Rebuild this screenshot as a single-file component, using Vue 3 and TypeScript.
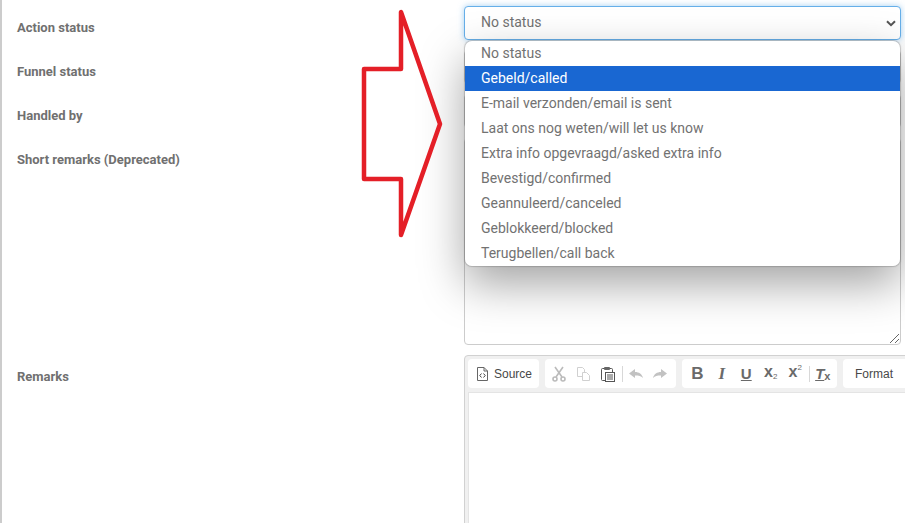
<script setup lang="ts">
const statuses: string[] = [
  'No status',
  'Gebeld/called',
  'E-mail verzonden/email is sent',
  'Laat ons nog weten/will let us know',
  'Extra info opgevraagd/asked extra info',
  'Bevestigd/confirmed',
  'Geannuleerd/canceled',
  'Geblokkeerd/blocked',
  'Terugbellen/call back',
]
const activeIndex = 1
</script>

<template>
  <div class="page">
    <form class="form">
      <div class="label">Action status</div>
      <div class="field select-wrap">
        <div class="select focused">
          <span>No status</span>
          <svg class="chevron" width="10" height="7" viewBox="0 0 10 7"><path d="M1 1.200 5 5.200l4-4" fill="none" stroke="#555" stroke-width="2" /></svg>
        </div>
        <ul class="menu">
          <li v-for="(s, i) in statuses" :key="s" :class="{ active: i === activeIndex }">{{ s }}</li>
        </ul>
      </div>

      <div class="label">Funnel status</div>
      <div class="field"><div class="select"></div></div>

      <div class="label">Handled by</div>
      <div class="field"><div class="select"></div></div>

      <div class="label">Short remarks (Deprecated)</div>
      <div class="field">
        <div class="textarea">
          <svg class="grip" width="11" height="11" viewBox="0 0 11 11"><path d="M1 10 10 1M6 10l4-4" stroke="#666" stroke-width="1" fill="none" /></svg>
        </div>
      </div>

      <div class="label remarks">Remarks</div>
      <div class="editor">
        <div class="toolbar">
          <div class="group">
            <button type="button" class="tool source">
              <svg width="16" height="16" viewBox="0 0 16 16"><path d="M2.500 1.500h6.500l3.500 3.500v9.500H2.500zM9 1.500V5h3.500" fill="none" stroke="#666" /><path d="M6.500 7.500 4.800 9.500l1.700 2M8.500 7.500l1.700 2-1.700 2" fill="none" stroke="#444" /></svg>
              <span>Source</span>
            </button>
          </div>
          <div class="group g2">
            <span class="tool icon">
              <svg width="16" height="16" viewBox="0 0 16 16"><g fill="none" stroke="#bbb" stroke-width="1.600"><circle cx="4" cy="13" r="2" /><circle cx="12" cy="13" r="2" /><path d="M5 11 12 1M11 11 4 1" /></g></svg>
            </span>
            <span class="tool icon">
              <svg width="16" height="16" viewBox="0 0 16 16"><g fill="#fff" stroke="#d0d0d0"><path d="M1.500 1.500h5l2 2v7h-7z" /><path d="M6.500 6.500h4l3 3v5h-7z" /></g></svg>
            </span>
            <span class="tool icon">
              <svg width="16" height="16" viewBox="0 0 16 16"><rect x="1.500" y="2.500" width="11" height="12" rx="1" fill="none" stroke="#555" /><rect x="4" y="1" width="6" height="3" rx="1" fill="#666" /><rect x="5.500" y="6.500" width="9" height="9" fill="#fff" stroke="#555" /><path d="M7 9h6M7 11h6M7 13h6" stroke="#555" /></svg>
            </span>
            <i class="sep"></i>
            <span class="tool icon">
              <svg width="16" height="16" viewBox="0 0 16 16"><path d="M1 7.500 7 3v3c4 0 7 2 8 6-2-2-4-2.500-8-2.500V12z" fill="#c2c2c2" /></svg>
            </span>
            <span class="tool icon">
              <svg width="16" height="16" viewBox="0 0 16 16"><path d="M15 7.500 9 3v3c-4 0-7 2-8 6 2-2 4-2.500 8-2.500V12z" fill="#c2c2c2" /></svg>
            </span>
          </div>
          <div class="group g3">
            <span class="tool icon glyph bold">B</span>
            <span class="tool icon glyph ital">I</span>
            <span class="tool icon glyph under">U</span>
            <span class="tool icon glyph script">x<sub>2</sub></span>
            <span class="tool icon glyph script">x<sup>2</sup></span>
            <i class="sep"></i>
            <span class="tool icon glyph clear"><u>T</u><sub>x</sub></span>
          </div>
          <div class="group format">Format</div>
        </div>
        <div class="content"></div>
      </div>
    </form>

    <svg class="arrow" width="90" height="240" viewBox="0 0 90 240">
      <path d="M41 12V69H4V179H41V235L80 124Z" fill="none" stroke="#e41f27" stroke-width="4.500" stroke-linejoin="round" />
    </svg>
  </div>
</template>

<style>
html, body { margin: 0; background: #fff; overflow: hidden; }
</style>

<style scoped>
.page {
  position: relative;
  width: 905px;
  height: 523px;
  overflow: hidden;
  box-sizing: border-box;
  border-left: 2px solid #ccc;
  font-family: Roboto, "Liberation Sans", sans-serif;
  color: #727272;
  background: #fff;
}
.form {
  display: grid;
  grid-template-columns: 447px 437px;
  grid-template-rows: 44px 44px 44px 217px auto;
  padding: 6px 0 0 15px;
}
.label {
  font-size: 13px;
  font-weight: 700;
  color: #707070;
  padding-top: 14px;
}
.field { position: relative; }
.select {
  position: relative;
  box-sizing: border-box;
  height: 34px;
  display: flex;
  align-items: center;
  padding: 0 0 2px 16px;
  font-size: 14px;
  background: #fff;
  border: 1px solid #ccc;
  border-radius: 4px;
}
.select.focused {
  border-color: #66afe9;
  box-shadow: 0 0 6px rgba(102, 175, 233, .6);
}
.chevron { position: absolute; right: 4px; top: 13px; }
.menu {
  position: absolute;
  z-index: 2;
  top: 35px;
  left: 1px;
  right: 1px;
  height: 225px;
  margin: 0;
  padding: 0;
  list-style: none;
  background: #fff;
  border-radius: 7px;
  overflow: hidden;
  font-size: 14px;
  box-shadow: 0 0 1px 1px rgba(90, 90, 90, .3);
}
.select-wrap::after {
  content: '';
  position: absolute;
  z-index: 1;
  top: 35px;
  left: 1px;
  right: 1px;
  height: 225px;
  border-radius: 7px;
  box-shadow: 0 18px 45px rgba(0, 0, 0, .36);
}
.menu li {
  height: 25px;
  line-height: 25px;
  padding-left: 16px;
}
.menu li.active {
  background: #1967d2;
  color: #fff;
}
.textarea {
  position: relative;
  box-sizing: border-box;
  height: 207px;
  border: 1px solid #ccc;
  border-radius: 4px;
}
.grip { position: absolute; right: 0; bottom: 0; }
.editor {
  box-sizing: border-box;
  width: 460px;
  height: 180px;
  border: 1px solid #d1d1d1;
  border-radius: 4px 0 0 0;
  background: #f0f0f0;
}
.toolbar {
  display: flex;
  gap: 6px;
  padding: 3px;
  height: 30px;
  box-sizing: content-box;
}
.group {
  display: flex;
  align-items: center;
  background: #fff;
  border-radius: 4px;
  height: 29px;
  flex: none;
  padding: 0 2px;
}
.g2 { width: 131px; box-sizing: border-box; }
.g3 { width: 155px; box-sizing: border-box; padding-left: 1px; }
.tool {
  display: flex;
  align-items: center;
  justify-content: center;
  height: 29px;
  color: #484848;
}
button.tool {
  border: 0;
  background: none;
  padding: 0 5px 0 5px;
  gap: 3px;
  font: 12px Arial, "Liberation Sans", sans-serif;
}
.icon { width: 24.500px; }
.sep {
  width: 1px;
  height: 16px;
  background: #d8d8d8;
  margin: 0 1px;
}
.glyph {
  font-family: "Liberation Sans", Arial, sans-serif;
  color: #6a6a6a;
}
.bold { font-weight: 700; font-size: 17px; padding-left: 2px; }
.ital { font-weight: 700; font-style: italic; font-size: 17px; font-family: "Liberation Serif", serif; }
.under { font-weight: 700; font-size: 15px; text-decoration: underline; }
.script { font-weight: 700; font-size: 16px; padding-bottom: 3px; box-sizing: border-box; }
.script sub, .script sup { font-size: 8px; font-weight: 400; line-height: 1; }
.script sub { align-self: flex-end; margin-bottom: 4px; }
.script sup { align-self: flex-start; margin-top: 5px; }
.clear { font-weight: 700; font-style: italic; font-size: 15px; }
.clear sub { font-size: 11px; font-style: normal; line-height: 1; align-self: flex-end; margin-bottom: 6px; }
.format {
  width: 120px;
  padding-left: 12px;
  box-sizing: border-box;
  font: 12px Arial, "Liberation Sans", sans-serif;
  color: #484848;
}
.content {
  background: #fff;
  height: 140px;
  margin: 0 0 0 3px;
  border: 1px solid #e4e4e4;
  border-width: 1px 0 0 1px;
}
.arrow {
  position: absolute;
  z-index: 3;
  left: 358px;
  top: 0;
}
</style>
